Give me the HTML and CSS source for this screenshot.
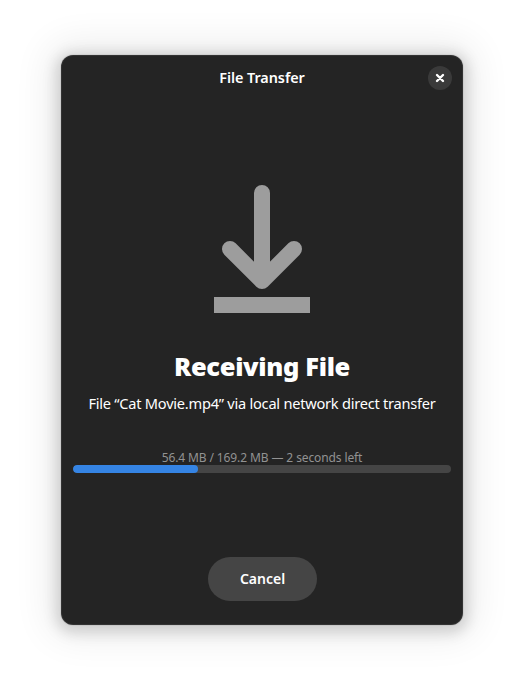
FILE: index.html
```html
<!DOCTYPE html>
<html lang="en">
<head>
<meta charset="utf-8">
<title>File Transfer</title>
<link rel="stylesheet" href="styles.css">
</head>
<body>
<main class="window">
  <header class="titlebar">
    <h1 class="title">File Transfer</h1>
    <button class="close" aria-label="Close">
      <svg width="24" height="24" viewBox="0 0 24 24"><path d="M9 9l6 6M15 9l-6 6" stroke="#fff" stroke-width="2.4" stroke-linecap="round"/></svg>
    </button>
  </header>
  <svg class="icon" width="96" height="128" viewBox="0 0 96 128">
    <path d="M48 8V96M16 64L48 96L80 64" fill="none" stroke="#9d9d9d" stroke-width="16" stroke-linecap="round" stroke-linejoin="round"/>
    <path d="M0 112H96V128H0z" fill="#9d9d9d"/>
  </svg>
  <h2 class="heading">Receiving File</h2>
  <p class="description">File “Cat Movie.mp4” via local network direct transfer</p>
  <section class="progress">
    <p class="status">56.4 MB / 169.2 MB — 2 seconds left</p>
    <div class="track"><div class="fill"></div></div>
  </section>
  <button class="cancel">Cancel</button>
</main>
</body>
</html>
```
FILE: styles.css
```css
* { box-sizing: border-box; }
body { margin: 0; height: 692px; background: #fff; font-family: "Noto Sans", sans-serif; overflow: hidden; }
h1, h2, p { margin: 0; white-space: nowrap; }
button { border: 0; padding: 0; font: inherit; color: #fff; }
.window {
  display: flex; flex-direction: column; align-items: center;
  width: 402px; height: 570px; margin: 55px 0 0 61px; padding: 0 12px;
  color: #fff; background: #242424; border-radius: 12px;
  box-shadow: inset 0 0 0 1px rgba(255,255,255,.07), 0 0 0 1px rgba(0,0,0,.05), 0 3px 14px 5px rgba(0,0,0,.15), 0 0 36px 14px rgba(0,0,0,.07);
}
.titlebar { display: grid; grid-template-columns: 24px 1fr 24px; align-items: center; width: 100%; height: 46px; flex: none; }
.title { grid-column: 2; text-align: center; font-size: 14.4px; line-height: 20px; font-weight: 600; letter-spacing: -.05px; }
.close { width: 24px; height: 24px; margin-left: 1px; border-radius: 50%; background: #3a3a3a; }
.close svg { display: block; }
.icon { margin-top: 84px; flex: none; }
.heading { margin-top: 35px; font-size: 25.5px; line-height: 36px; font-weight: 900; letter-spacing: -.35px; }
.description { margin-top: 9px; font-size: 14.6px; line-height: 20px; letter-spacing: -.24px; }
.progress { width: 100%; margin-top: 37px; }
.status { text-align: center; font-size: 12px; line-height: 16px; color: #929292; letter-spacing: -.11px; }
.track { height: 8px; border-radius: 4px; background: #454545; overflow: hidden; margin-top: -1px; }
.fill { width: 33.2%; height: 8px; border-radius: 4px; background: #3584e4; }
.cancel { margin-top: 84px; width: 109px; height: 44px; flex: none; border-radius: 22px; background: #454545; font-size: 14px; line-height: 20px; padding: 0 0 1px 1px; font-weight: 600; }
```
